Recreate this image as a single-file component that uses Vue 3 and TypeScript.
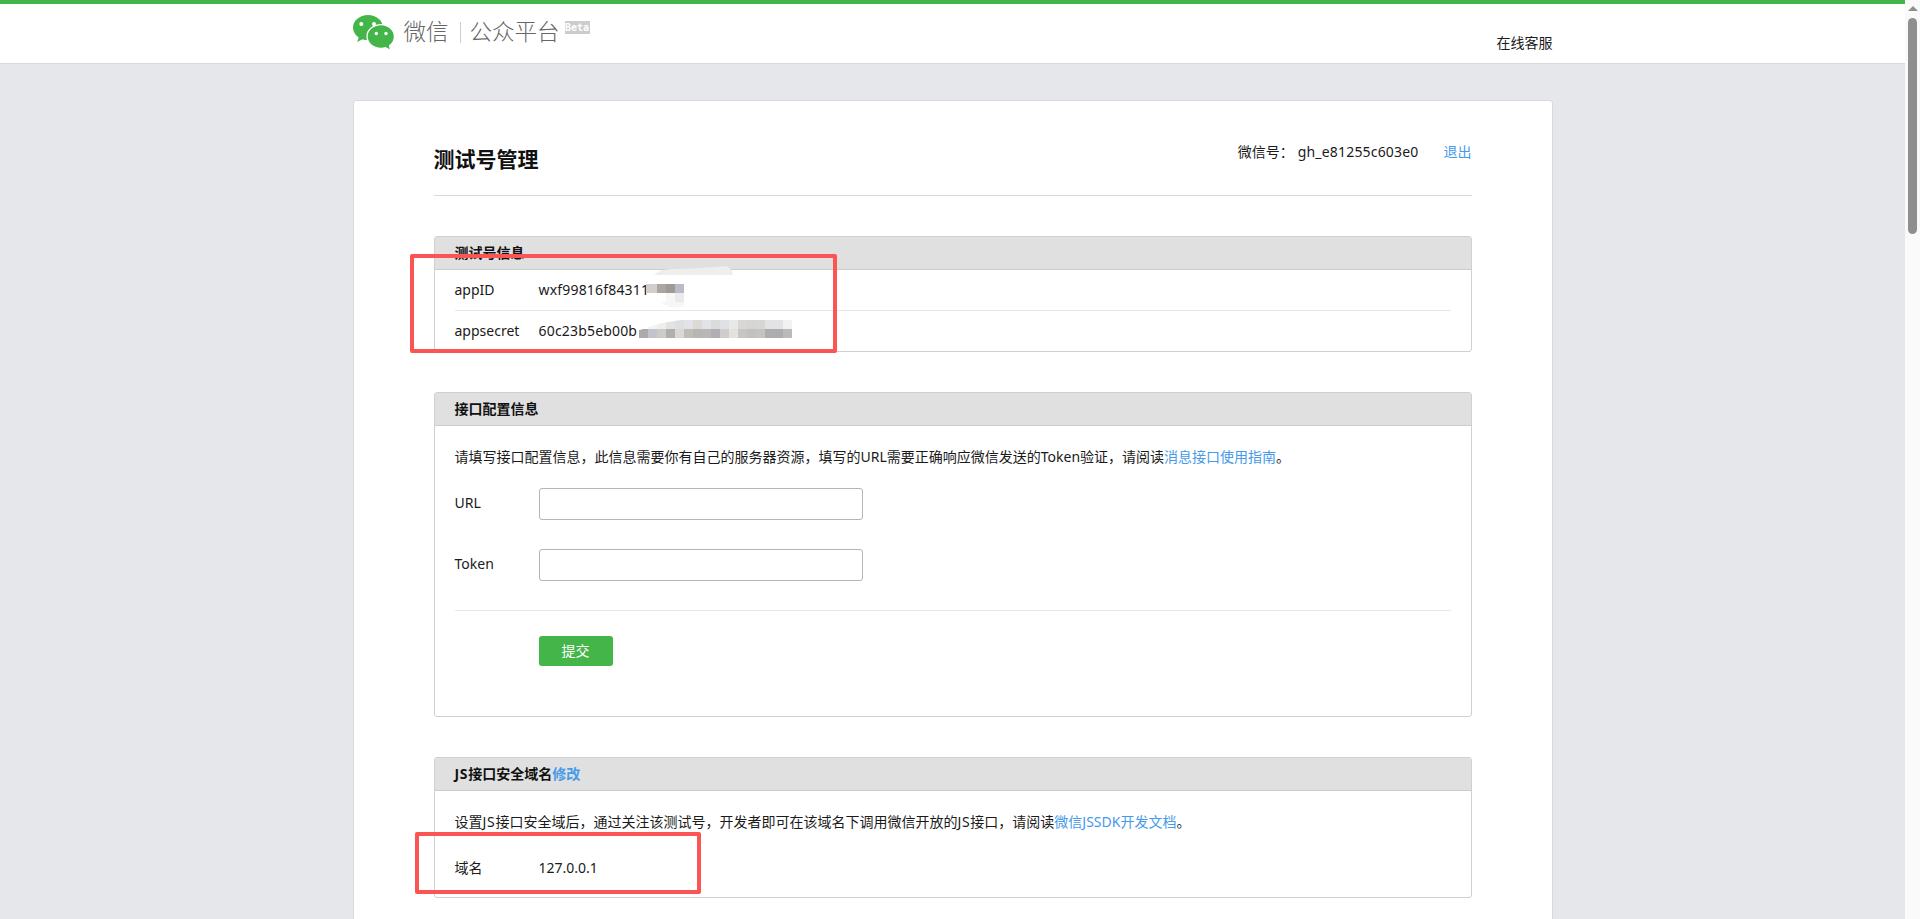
<template>
  <div class="shot">
    <div class="viewport">
      <div class="top-bar"></div>
      <header class="site-head">
        <div class="site-head-inner">
          <a class="brand">
            <svg class="brand-logo" viewBox="0 0 41 35" width="41" height="35">
              <path fill="#44b549" d="M15 0C6.700 0 0 5.600 0 12.600c0 4 2.200 7.600 5.700 9.900L4.200 27l5.300-2.800c1.700.5 3.600.9 5.500.9 8.300 0 15-5.600 15-12.500S23.300 0 15 0z" />
              <circle cx="8.300" cy="9" r="2" fill="#fff" />
              <circle cx="21" cy="9" r="2" fill="#fff" />
              <path fill="#44b549" stroke="#fff" stroke-width="2.600" paint-order="stroke" d="M28 10.300c-7.500 0-13.300 5-13.300 11.200 0 6.200 5.800 11.200 13.300 11.200 1.600 0 3.100-.2 4.500-.7l4.400 2.300-1.100-3.700c3-2.100 5-5.400 5-9.100 0-6.200-5.800-11.200-12.800-11.200z" />
              <circle cx="23.300" cy="18.500" r="1.700" fill="#fff" />
              <circle cx="33" cy="18.500" r="1.700" fill="#fff" />
            </svg>
            <span class="brand-name">微信</span>
            <span class="brand-sep"></span>
            <span class="brand-name">公众平台</span>
            <span class="brand-beta">Beta</span>
          </a>
          <a class="service">在线客服</a>
        </div>
      </header>

      <main class="card">
        <div class="card-head">
          <h1>测试号管理</h1>
          <div class="account">
            <span>微信号：</span>
            <span class="account-id key">gh_e81255c603e0</span>
            <a class="link">退出</a>
          </div>
        </div>

        <section class="panel">
          <h2 class="panel-title">测试号信息</h2>
          <div class="panel-body no-pad">
            <div class="info-row">
              <label>appID</label>
              <span class="key">wxf99816f84311</span>
            </div>
            <div class="info-row">
              <label>appsecret</label>
              <span class="key">60c23b5eb00b</span>
            </div>
          </div>
        </section>

        <section class="panel">
          <h2 class="panel-title">接口配置信息</h2>
          <div class="panel-body config">
            <p>请填写接口配置信息，此信息需要你有自己的服务器资源，填写的URL需要正确响应微信发送的Token验证，请阅读<a class="link">消息接口使用指南</a>。</p>
            <div class="field">
              <label>URL</label>
              <input type="text" />
            </div>
            <div class="field">
              <label>Token</label>
              <input type="text" />
            </div>
            <div class="actions">
              <button type="button">提交</button>
            </div>
          </div>
        </section>

        <section class="panel">
          <h2 class="panel-title"><span class="js">JS</span>接口安全域名<a class="link">修改</a></h2>
          <div class="panel-body domain">
            <p>设置<span class="js">JS</span>接口安全域后，通过关注该测试号，开发者即可在该域名下调用微信开放的<span class="js">JS</span>接口，请阅读<a class="link">微信JSSDK开发文档</a>。</p>
            <div class="info-row plain">
              <label>域名</label>
              <span>127.0.0.1</span>
            </div>
          </div>
        </section>
      </main>
    </div>

    <div class="scrollbar">
      <span class="scroll-arrow"></span>
      <span class="scroll-thumb"></span>
    </div>

    <!-- blur marks and red boxes somebody drew on top of the screenshot -->
    <svg class="smudge" width="1920" height="919" viewBox="0 0 1920 919">
      <path fill="#eeeeee" d="M654 275 Q660 268 676 269 Q705 268 726 266 Q732 268 733 275Z" />
      <path fill="#f6f6f6" d="M660 302 L666 302 L666 293 L684 293 L684 302 L684 306 Q672 310 664 304Z" />
    </svg>
    <div class="mosaic mosaic-id">
      <i v-for="(c, i) in idCells" :key="i" :style="{ background: c }"></i>
    </div>
    <div class="mosaic mosaic-secret">
      <i v-for="(c, i) in secretCells" :key="i" :style="{ background: c }"></i>
    </div>
    <svg class="smudge" width="1920" height="919" viewBox="0 0 1920 919">
      <path fill="#fff" d="M638 319 L692 319 Q662 321 640 330 L638 330Z" />
    </svg>
    <div class="mark mark-keys"></div>
    <div class="mark mark-domain"></div>
  </div>
</template>

<script setup lang="ts">
const idCells: string[] = [
  '#d0cfce', '#a9a6a4', '#9f9a97', '#b9bcc6',
  'transparent', 'transparent', '#f7f7f7', '#ebebeb',
]

const secretCells: string[] = [
  '#ffffff', '#f4f4f4', '#eeeeee', '#e3e3e3', '#dedede', '#e2e3e8', '#dcdad6', '#e2e3e6', '#dbdadc',
  '#e0e1e6', '#e8e8e6', '#d8d6d6', '#d6d5d5', '#d6d6d4', '#e3e3e5', '#e3e3e5', '#f1f2f1',
  '#aeaaa7', '#c2c3cd', '#cdcbc8', '#b1afad', '#d9d8d7', '#bfbcb9', '#b8b6b5', '#b9b7b6', '#b0aeb2',
  '#cfcdcb', '#e3e2de', '#c9c5c4', '#c3c1bf', '#c6c4c2', '#aeacad', '#aeacad', '#bbbaba',
]
</script>

<style scoped>
.shot {
  position: relative;
  display: flex;
  width: 1920px;
  height: 919px;
  overflow: hidden;
  background: #e6e7eb;
  color: #1a1a1a;
  font: 14px/22px "Noto Sans", "Noto Sans CJK SC", sans-serif;
}

.viewport {
  flex: 1;
  min-width: 0;
}

.top-bar {
  height: 4px;
  background: #44b549;
}

.site-head {
  height: 59px;
  background: #fff;
  border-bottom: 1px solid #d9dadc;
}

.site-head-inner {
  display: flex;
  justify-content: space-between;
  width: 1200px;
  margin: 0 auto;
}

.brand {
  display: flex;
  align-items: center;
  height: 56px;
  color: #666;
}

.brand-logo {
  margin: 0 10px 0 0;
}

.brand-name {
  font-size: 22.5px;
  font-weight: 300;
  line-height: 30px;
}

.brand-sep {
  width: 1px;
  height: 21px;
  margin: 0 9px 0 11px;
  background: #ccc;
}

.brand-beta {
  align-self: flex-start;
  width: 25px;
  height: 13px;
  margin: 17px 0 0 5px;
  background: #ccc;
  color: #fff;
  font: 700 10px/13px "DejaVu Sans Mono", monospace;
  text-align: center;
}

.service {
  margin-top: 28px;
  line-height: 22px;
}

.card {
  width: 1200px;
  height: 900px;
  margin: 36px auto 0;
  padding: 0 80px;
  box-sizing: border-box;
  background: #fff;
  border: 1px solid #d9dadc;
  border-radius: 3px;
}

.card-head {
  display: flex;
  justify-content: space-between;
  height: 94px;
  margin-bottom: 40px;
  border-bottom: 1px solid #d9d9d9;
}

.card-head h1 {
  margin: 43px 0 0;
  font-size: 21px;
  font-weight: 700;
  line-height: 30px;
  color: #111;
}

.account {
  display: flex;
  margin-top: 40px;
}

.account-id {
  margin-left: 4px;
}

.account .link {
  margin-left: 25px;
}

.key {
  letter-spacing: 0.18px;
}

.js {
  letter-spacing: 0.7px;
}

.link {
  color: #459ae9;
}

.panel {
  margin-bottom: 40px;
  border: 1px solid #d0d0d0;
  border-radius: 3px;
}

.panel-title {
  height: 32px;
  margin: 0;
  padding: 0 20px;
  background: #e0e0e0;
  border-bottom: 1px solid #ccc;
  font-size: 14px;
  font-weight: 700;
  line-height: 32px;
  color: #111;
}

.panel-body {
  padding: 0 20px;
}

.info-row {
  display: flex;
  height: 40px;
  align-items: center;
  border-bottom: 1px solid #e7e7e7;
}

.info-row:last-child {
  border-bottom: none;
}

.info-row label {
  width: 84px;
}

.panel p {
  margin: 0;
}

.config {
  padding-top: 20px;
  padding-bottom: 50px;
}

.field {
  display: flex;
  margin-top: 20px;
}

.field + .field {
  margin-top: 29px;
}

.field label {
  width: 84px;
  line-height: 29px;
}

.field input {
  width: 324px;
  height: 32px;
  padding: 0 8px;
  box-sizing: border-box;
  background: #fff;
  border: 1px solid #b5b5b5;
  border-radius: 3px;
  outline: none;
}

.actions {
  margin-top: 29px;
  padding: 25px 0 0 84px;
  border-top: 1px solid #e7e7e7;
}

.actions button {
  display: block;
  width: 74px;
  height: 30px;
  padding: 0;
  background: #44b549;
  border: none;
  border-radius: 3px;
  color: #fff;
  font: inherit;
}

.domain {
  padding-top: 20px;
  padding-bottom: 9px;
}

.info-row.plain {
  margin-top: 15px;
  border: none;
}

.scrollbar {
  flex: 0 0 15px;
  position: relative;
  background: #fafafa;
}

.scroll-arrow {
  position: absolute;
  top: 6px;
  left: 3px;
  border-left: 5px solid transparent;
  border-right: 5px solid transparent;
  border-bottom: 5px solid #8f8f8f;
}

.scroll-thumb {
  position: absolute;
  top: 18px;
  left: 3px;
  width: 9px;
  height: 216px;
  border-radius: 5px;
  background: #8f8f8f;
}

.smudge {
  position: absolute;
  top: 0;
  left: 0;
  pointer-events: none;
}

.mosaic {
  position: absolute;
  display: grid;
  grid-auto-rows: 9px;
}

.mosaic-id {
  top: 284px;
  left: 646px;
  grid-template-columns: 11px repeat(3, 9px);
}

.mosaic-secret {
  top: 320px;
  left: 639px;
  grid-template-columns: repeat(17, 9px);
}

.mark {
  position: absolute;
  box-sizing: border-box;
  border: 4px solid #fc5353;
  border-radius: 2px;
}

.mark-keys {
  top: 254px;
  left: 410px;
  width: 427px;
  height: 99px;
}

.mark-domain {
  top: 832px;
  left: 415px;
  width: 286px;
  height: 62px;
}
</style>

<style>
html,
body {
  overflow: hidden;
}
</style>
